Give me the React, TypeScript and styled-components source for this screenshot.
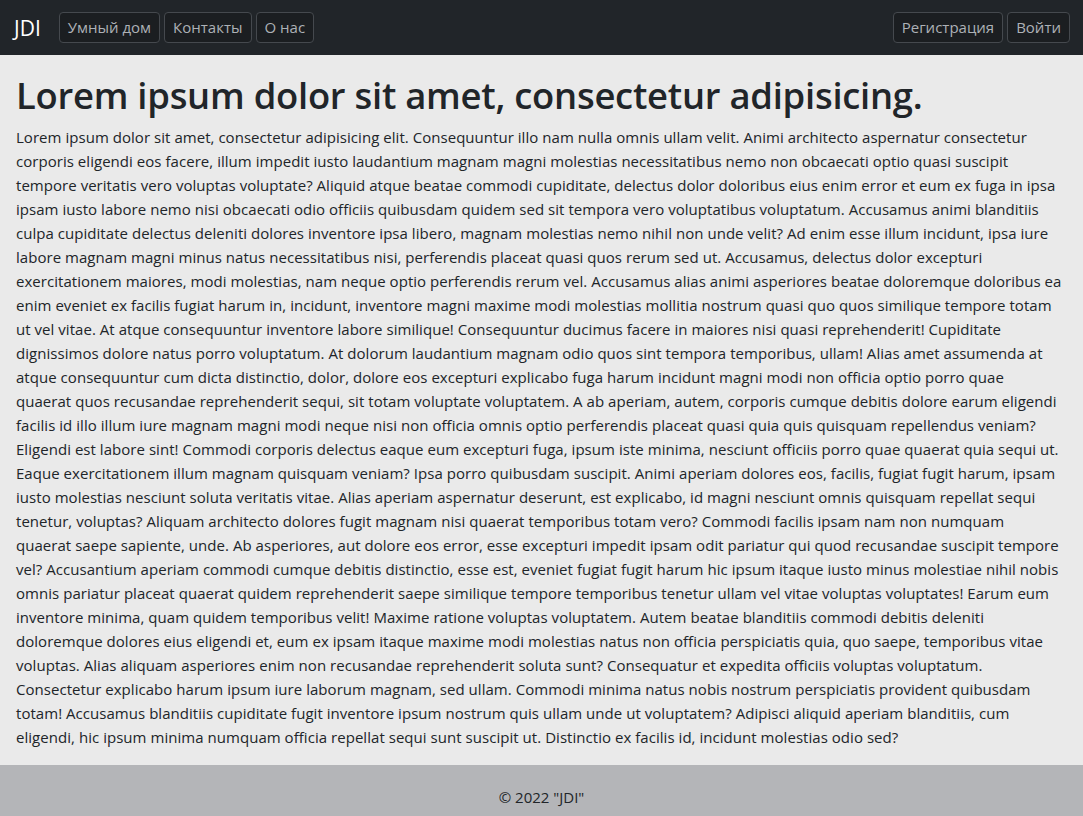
import React from "react";
import styled, { createGlobalStyle } from "styled-components";

const GlobalStyle = createGlobalStyle`
  html, body { margin: 0; padding: 0; }
  body {
    font-family: "Open Sans", "Noto Sans", "Liberation Sans", sans-serif;
    color: #212529;
    background: #eaeaea;
  }
  * { box-sizing: border-box; }
`;

const Page = styled.div`
  display: flex;
  flex-direction: column;
  min-height: 816px;
`;

const NavBar = styled.header`
  height: 55px;
  background: #212529;
  display: flex;
  align-items: center;
  justify-content: space-between;
  padding: 0 13px 0 14px;
`;

const NavGroup = styled.nav`
  display: flex;
  align-items: center;
  gap: 4px;
`;

const Brand = styled.a`
  color: #ffffff;
  font-size: 21px;
  line-height: 30px;
  margin-right: 14px;
  text-decoration: none;
`;

const NavButton = styled.button`
  font-family: inherit;
  font-size: 15px;
  letter-spacing: 0;
  line-height: 21px;
  padding: 4px 8px;
  color: #adb1b6;
  background: #1b1e21;
  border: 1px solid #45494e;
  border-radius: 4px;
  cursor: pointer;
`;

const Main = styled.main`
  flex: 1;
  padding: 15px 16px 0 16px;
  background: #eaeaea;
`;

const Title = styled.h1`
  margin: 0 0 5px 0;
  font-size: 36.4px;
  font-weight: 600;
  line-height: 50px;
  letter-spacing: -0.25px;
  color: #212529;
`;

const Body = styled.p`
  margin: 0 0 16px 0;
  font-size: 15px;
  line-height: 24px;
  letter-spacing: 0.04px;
  white-space: nowrap;
  color: #212529;
`;

const Footer = styled.footer`
  background: #b4b5b8;
  padding: 20px 0;
  text-align: center;
  font-size: 15px;
  line-height: 24px;
  color: #212529;
`;

const lines = [
  "Lorem ipsum dolor sit amet, consectetur adipisicing elit. Consequuntur illo nam nulla omnis ullam velit. Animi architecto aspernatur consectetur",
  "corporis eligendi eos facere, illum impedit iusto laudantium magnam magni molestias necessitatibus nemo non obcaecati optio quasi suscipit",
  "tempore veritatis vero voluptas voluptate? Aliquid atque beatae commodi cupiditate, delectus dolor doloribus eius enim error et eum ex fuga in ipsa",
  "ipsam iusto labore nemo nisi obcaecati odio officiis quibusdam quidem sed sit tempora vero voluptatibus voluptatum. Accusamus animi blanditiis",
  "culpa cupiditate delectus deleniti dolores inventore ipsa libero, magnam molestias nemo nihil non unde velit? Ad enim esse illum incidunt, ipsa iure",
  "labore magnam magni minus natus necessitatibus nisi, perferendis placeat quasi quos rerum sed ut. Accusamus, delectus dolor excepturi",
  "exercitationem maiores, modi molestias, nam neque optio perferendis rerum vel. Accusamus alias animi asperiores beatae doloremque doloribus ea",
  "enim eveniet ex facilis fugiat harum in, incidunt, inventore magni maxime modi molestias mollitia nostrum quasi quo quos similique tempore totam",
  "ut vel vitae. At atque consequuntur inventore labore similique! Consequuntur ducimus facere in maiores nisi quasi reprehenderit! Cupiditate",
  "dignissimos dolore natus porro voluptatum. At dolorum laudantium magnam odio quos sint tempora temporibus, ullam! Alias amet assumenda at",
  "atque consequuntur cum dicta distinctio, dolor, dolore eos excepturi explicabo fuga harum incidunt magni modi non officia optio porro quae",
  "quaerat quos recusandae reprehenderit sequi, sit totam voluptate voluptatem. A ab aperiam, autem, corporis cumque debitis dolore earum eligendi",
  "facilis id illo illum iure magnam magni modi neque nisi non officia omnis optio perferendis placeat quasi quia quis quisquam repellendus veniam?",
  "Eligendi est labore sint! Commodi corporis delectus eaque eum excepturi fuga, ipsum iste minima, nesciunt officiis porro quae quaerat quia sequi ut.",
  "Eaque exercitationem illum magnam quisquam veniam? Ipsa porro quibusdam suscipit. Animi aperiam dolores eos, facilis, fugiat fugit harum, ipsam",
  "iusto molestias nesciunt soluta veritatis vitae. Alias aperiam aspernatur deserunt, est explicabo, id magni nesciunt omnis quisquam repellat sequi",
  "tenetur, voluptas? Aliquam architecto dolores fugit magnam nisi quaerat temporibus totam vero? Commodi facilis ipsam nam non numquam",
  "quaerat saepe sapiente, unde. Ab asperiores, aut dolore eos error, esse excepturi impedit ipsam odit pariatur qui quod recusandae suscipit tempore",
  "vel? Accusantium aperiam commodi cumque debitis distinctio, esse est, eveniet fugiat fugit harum hic ipsum itaque iusto minus molestiae nihil nobis",
  "omnis pariatur placeat quaerat quidem reprehenderit saepe similique tempore temporibus tenetur ullam vel vitae voluptas voluptates! Earum eum",
  "inventore minima, quam quidem temporibus velit! Maxime ratione voluptas voluptatem. Autem beatae blanditiis commodi debitis deleniti",
  "doloremque dolores eius eligendi et, eum ex ipsam itaque maxime modi molestias natus non officia perspiciatis quia, quo saepe, temporibus vitae",
  "voluptas. Alias aliquam asperiores enim non recusandae reprehenderit soluta sunt? Consequatur et expedita officiis voluptas voluptatum.",
  "Consectetur explicabo harum ipsum iure laborum magnam, sed ullam. Commodi minima natus nobis nostrum perspiciatis provident quibusdam",
  "totam! Accusamus blanditiis cupiditate fugit inventore ipsum nostrum quis ullam unde ut voluptatem? Adipisci aliquid aperiam blanditiis, cum",
  "eligendi, hic ipsum minima numquam officia repellat sequi sunt suscipit ut. Distinctio ex facilis id, incidunt molestias odio sed?",
];

export default function App() {
  return (
    <>
      <GlobalStyle />
      <Page>
        <NavBar>
          <NavGroup>
            <Brand href="#">JDI</Brand>
            <NavButton>Умный дом</NavButton>
            <NavButton>Контакты</NavButton>
            <NavButton>О нас</NavButton>
          </NavGroup>
          <NavGroup>
            <NavButton>Регистрация</NavButton>
            <NavButton>Войти</NavButton>
          </NavGroup>
        </NavBar>
        <Main>
          <Title>Lorem ipsum dolor sit amet, consectetur adipisicing.</Title>
          <Body>
            {lines.map((l, i) => (
              <React.Fragment key={i}>
                {l}
                {i < lines.length - 1 && <br />}
              </React.Fragment>
            ))}
          </Body>
        </Main>
        <Footer>© 2022 "JDI"</Footer>
      </Page>
    </>
  );
}
